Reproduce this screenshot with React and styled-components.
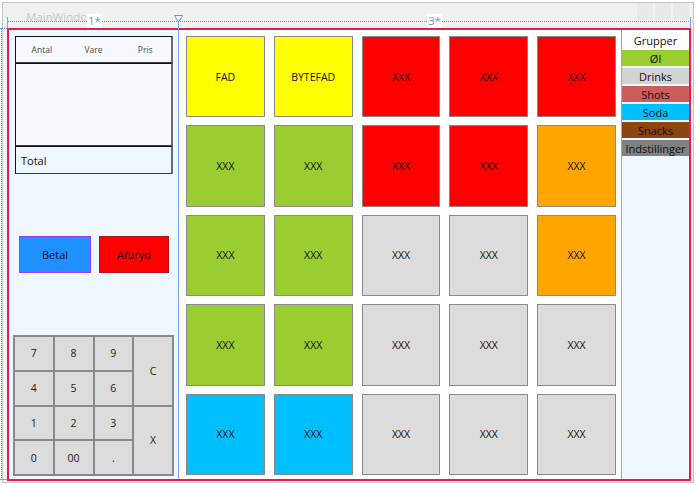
import React from 'react';
import styled, { createGlobalStyle } from 'styled-components';

const Global = createGlobalStyle`
  html, body { margin: 0; padding: 0; background: #ffffff; }
  body { font-family: "Open Sans", "Noto Sans", sans-serif; color: #1a1a1a; }
  * { box-sizing: border-box; }
`;

const Stage = styled.div`
  position: relative;
  width: 696px;
  height: 485px;
  padding: 2px;
  overflow: hidden;
  background: #ffffff;
`;

const Window = styled.div`
  width: 692px;
  height: 481px;
  border: 1px solid #c6c6c6;
  background: #f1f1f1;
  padding: 25px 2px 1px 4px;
`;

const Frame = styled.div`
  width: 684px;
  height: 453px;
  border: 2px solid #e2204c;
  display: grid;
  grid-template-columns: 170px 510px;
  background: #ffffff;
`;

const LeftPanel = styled.div`
  background: #f0f8ff;
  border-right: 1px solid #78a5ee;
  display: flex;
  flex-direction: column;
  align-items: flex-start;
`;

const Table = styled.div`
  margin: 6px 6px 0;
  width: 158px;
  display: flex;
  flex-direction: column;
`;

const Box = styled.div`
  border-top: 1px solid #111;
  border-left: 1px solid #111;
  border-right: 2px solid #6c6c6c;
  border-bottom: 1px solid #3a3a3a;
  height: ${p => p.$h}px;
  background: ${p => p.$bg};
`;

const HeaderRow = styled(Box)`
  display: grid;
  grid-template-columns: 1fr 1fr 1fr;
  align-items: center;
  text-align: center;
  font-size: 8.5px;
  color: #4a4a4a;
`;

const TotalRow = styled(Box)`
  display: flex;
  align-items: center;
  padding-left: 5px;
  font-size: 11px;
  color: #111;
`;

const ButtonRow = styled.div`
  display: flex;
  gap: 8px;
  margin: 62px 0 0 10px;
`;

const ActionButton = styled.div`
  width: ${p => p.$w}px;
  height: 37px;
  background: ${p => p.$bg};
  border: 1px solid ${p => p.$border};
  display: flex;
  align-items: center;
  justify-content: center;
  font-size: 11px;
  color: #111;
`;

const Keypad = styled.div`
  margin: 62px 0 0 4px;
  width: 161px;
  height: 141px;
  border: 1px solid #8a8a8a;
  display: grid;
  grid-template-columns: repeat(4, 1fr);
  grid-template-rows: repeat(4, 1fr);
`;

const Key = styled.div`
  background: #dcdcdc;
  border: 1px solid #8a8a8a;
  display: flex;
  align-items: center;
  justify-content: center;
  font-size: 10.5px;
  color: #1a1a1a;
  grid-row: ${p => (p.$tall ? 'span 2' : 'auto')};
`;

const RightPart = styled.div`
  display: grid;
  grid-template-columns: 442px 68px;
`;

const TileGrid = styled.div`
  padding: 6px 5px 4px 7px;
  display: grid;
  grid-template-columns: repeat(5, 1fr);
  grid-template-rows: repeat(5, 1fr);
  column-gap: 9px;
  row-gap: 8px;
  background: #ffffff;
`;

const Tile = styled.div`
  background: ${p => p.$bg};
  border: 1px solid #8a8a8a;
  display: flex;
  align-items: center;
  justify-content: center;
  font-size: 10.5px;
  color: #111;
`;

const GroupPanel = styled.div`
  border-left: 1px solid #a8a8a8;
  background: #f0f8ff;
  display: flex;
  flex-direction: column;
`;

const GroupHeader = styled.div`
  height: 20px;
  display: flex;
  align-items: center;
  justify-content: center;
  font-size: 11px;
  color: #111;
  background: #ffffff;
`;

const GroupItem = styled.div`
  height: 16px;
  margin-bottom: 2px;
  background: ${p => p.$bg};
  display: flex;
  align-items: center;
  justify-content: center;
  font-size: 11px;
  color: #111;
  white-space: nowrap;
`;

/* designer adornments, drawn over the window */
const Title = styled.div`
  position: absolute;
  left: 26px;
  top: 9px;
  width: 60px;
  overflow: hidden;
  white-space: nowrap;
  font-size: 11.5px;
  color: #c6c6c6;
`;

const DottedH = styled.div`
  position: absolute;
  left: ${p => p.$x}px;
  top: ${p => p.$y}px;
  width: ${p => p.$w}px;
  border-top: 1px dotted #5f90e4;
`;

const DottedV = styled.div`
  position: absolute;
  left: ${p => p.$x}px;
  top: ${p => p.$y}px;
  height: ${p => p.$h}px;
  border-left: 1px dotted #5f90e4;
`;

const SolidV = styled.div`
  position: absolute;
  left: ${p => p.$x}px;
  top: ${p => p.$y}px;
  height: ${p => p.$h}px;
  width: 1px;
  background: #78a5ee;
`;

const SolidH = styled.div`
  position: absolute;
  left: ${p => p.$x}px;
  top: ${p => p.$y}px;
  width: ${p => p.$w}px;
  height: 1px;
  background: #78a5ee;
`;

const RulerLabel = styled.div`
  position: absolute;
  top: 14px;
  left: ${p => p.$x}px;
  width: 15px;
  height: 14px;
  background: #ffffff;
  color: #6a9ce6;
  font-size: 11.5px;
  line-height: 14px;
  text-align: center;
`;

const Marker = styled.svg`
  position: absolute;
  left: 174px;
  top: 15px;
`;

const Chrome = styled.div`
  position: absolute;
  top: 3px;
  right: 7px;
  display: flex;
  gap: 2px;
`;

const ChromeButton = styled.div`
  width: 16px;
  height: 17px;
  background: #e9e9e9;
`;

const tiles = [
  ['FAD', '#ffff00'], ['BYTEFAD', '#ffff00'], ['XXX', '#ff0000'], ['XXX', '#ff0000'], ['XXX', '#ff0000'],
  ['XXX', '#9acd32'], ['XXX', '#9acd32'], ['XXX', '#ff0000'], ['XXX', '#ff0000'], ['XXX', '#ffa500'],
  ['XXX', '#9acd32'], ['XXX', '#9acd32'], ['XXX', '#dcdcdc'], ['XXX', '#dcdcdc'], ['XXX', '#ffa500'],
  ['XXX', '#9acd32'], ['XXX', '#9acd32'], ['XXX', '#dcdcdc'], ['XXX', '#dcdcdc'], ['XXX', '#dcdcdc'],
  ['XXX', '#00bfff'], ['XXX', '#00bfff'], ['XXX', '#dcdcdc'], ['XXX', '#dcdcdc'], ['XXX', '#dcdcdc'],
];

const groups = [
  ['Øl', '#9acd32'],
  ['Drinks', '#d3d3d3'],
  ['Shots', '#cd5c5c'],
  ['Soda', '#00bfff'],
  ['Snacks', '#8b4513'],
  ['Indstillinger', '#808080'],
];

const keys = [
  { k: '7' }, { k: '8' }, { k: '9' }, { k: 'C', tall: true },
  { k: '4' }, { k: '5' }, { k: '6' },
  { k: '1' }, { k: '2' }, { k: '3' }, { k: 'X', tall: true },
  { k: '0' }, { k: '00' }, { k: '.' },
];

export default function App() {
  return (
    <>
      <Global />
      <Stage>
        <Window>
          <Frame>
            <LeftPanel>
              <Table>
                <HeaderRow $h={27} $bg="#f6f9ff">
                  <span>Antal</span>
                  <span>Vare</span>
                  <span>Pris</span>
                </HeaderRow>
                <Box $h={83} $bg="#f8f9ff" />
                <TotalRow $h={28} $bg="#eef6ff">Total</TotalRow>
              </Table>
              <ButtonRow>
                <ActionButton $w={72} $bg="#1e90ff" $border="#9a3cf5">Betal</ActionButton>
                <ActionButton $w={70} $bg="#ff0000" $border="#b41414">Afbryd</ActionButton>
              </ButtonRow>
              <Keypad>
                {keys.map(({ k, tall }) => (
                  <Key key={k} $tall={tall}>{k}</Key>
                ))}
              </Keypad>
            </LeftPanel>
            <RightPart>
              <TileGrid>
                {tiles.map(([label, bg], i) => (
                  <Tile key={i} $bg={bg}>{label}</Tile>
                ))}
              </TileGrid>
              <GroupPanel>
                <GroupHeader>Grupper</GroupHeader>
                {groups.map(([label, bg]) => (
                  <GroupItem key={label} $bg={bg}>{label}</GroupItem>
                ))}
              </GroupPanel>
            </RightPart>
          </Frame>
        </Window>

        <Title>MainWindow</Title>
        <Chrome>
          <ChromeButton />
          <ChromeButton />
          <ChromeButton />
        </Chrome>
        <DottedH $x={7} $y={21} $w={684} />
        <SolidV $x={7} $y={17} $h={11} />
        <SolidV $x={690} $y={17} $h={11} />
        <SolidV $x={178} $y={21} $h={9} />
        <RulerLabel $x={87}>1*</RulerLabel>
        <RulerLabel $x={427}>3*</RulerLabel>
        <Marker width="9" height="8" viewBox="0 0 9 8">
          <path d="M0.5 0.5 H8.5 L4.5 7 Z" fill="#ffffff" stroke="#5f90e4" strokeWidth="1" />
        </Marker>
        <DottedV $x={1} $y={28} $h={452} />
        <DottedH $x={0} $y={28} $w={7} />
        <SolidH $x={0} $y={479} $w={7} />
      </Stage>
    </>
  );
}
